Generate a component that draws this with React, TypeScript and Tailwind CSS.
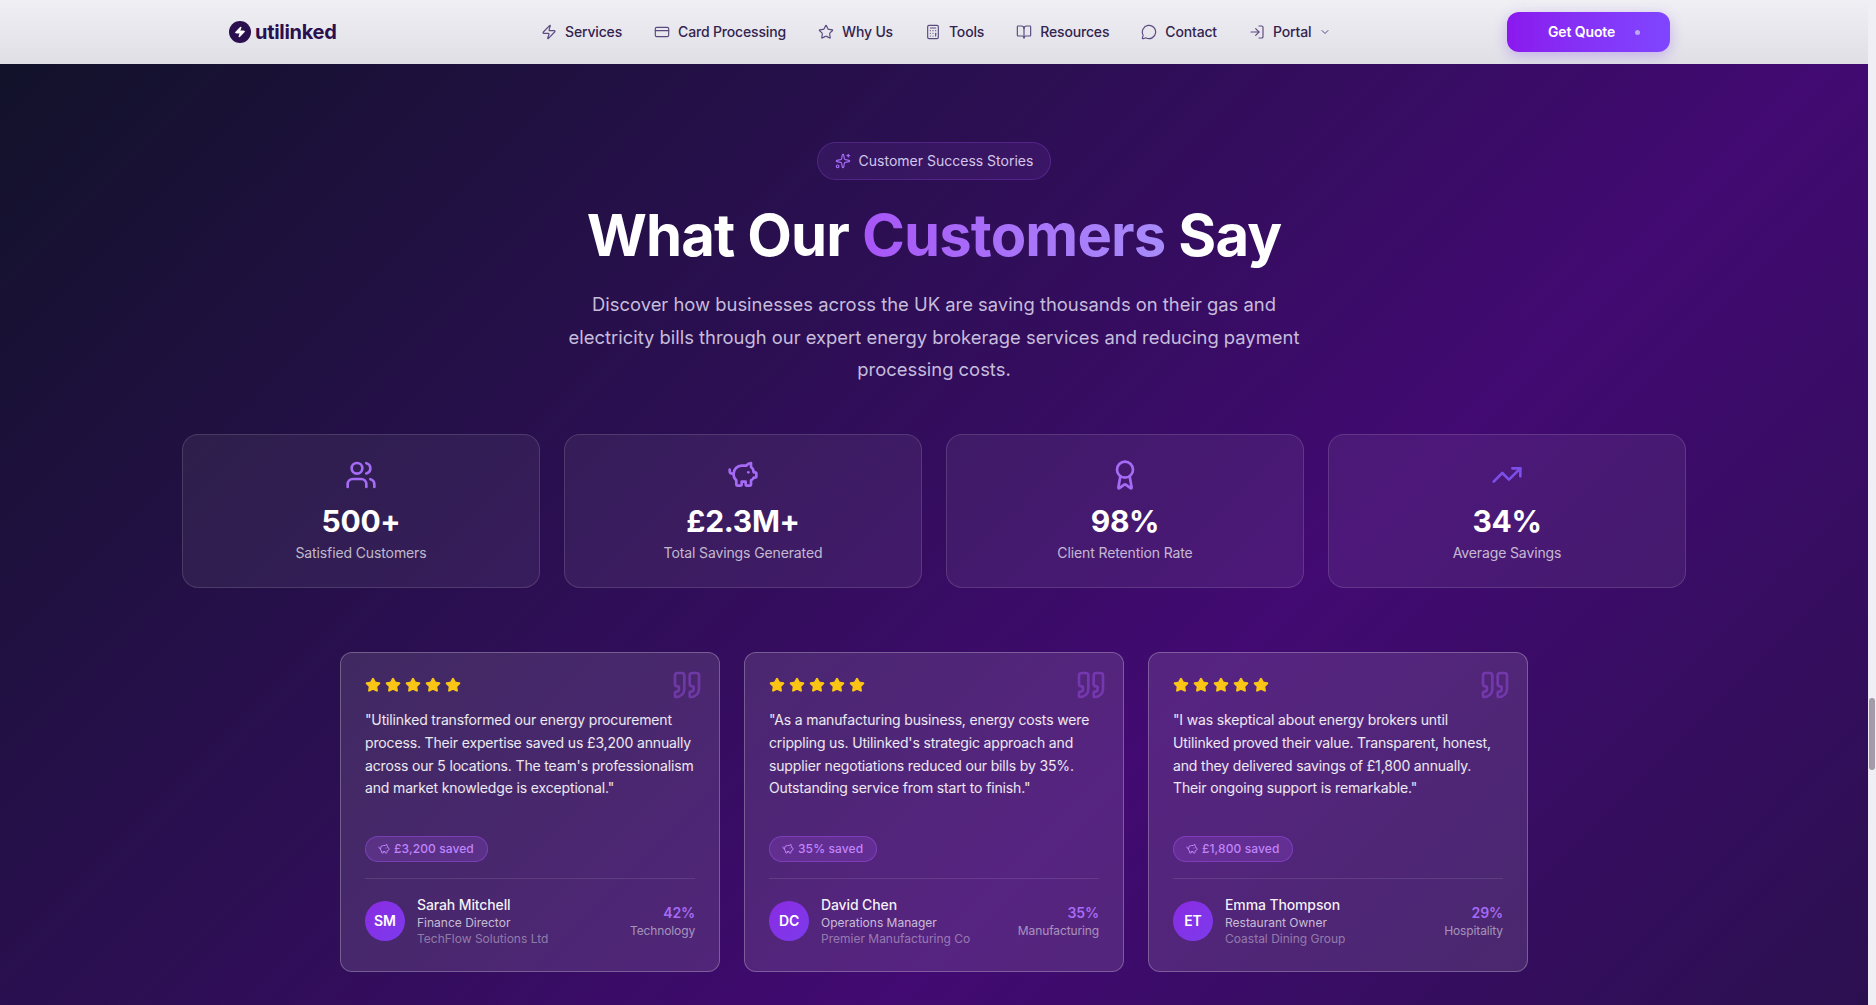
import React from "react";
import {
  Award,
  BookOpen,
  Calculator,
  ChevronDown,
  CreditCard,
  LogIn,
  MessageCircle,
  PiggyBank,
  Quote,
  Sparkles,
  Star,
  TrendingUp,
  Users,
  Zap,
} from "lucide-react";

const navItems = [
  { label: "Services", icon: Zap },
  { label: "Card Processing", icon: CreditCard },
  { label: "Why Us", icon: Star },
  { label: "Tools", icon: Calculator },
  { label: "Resources", icon: BookOpen },
  { label: "Contact", icon: MessageCircle },
  { label: "Portal", icon: LogIn },
];

const stats = [
  { value: "500+", label: "Satisfied Customers", icon: Users, color: "text-[#a56bf5]" },
  { value: "£2.3M+", label: "Total Savings Generated", icon: PiggyBank, color: "text-[#a56bf5]" },
  { value: "98%", label: "Client Retention Rate", icon: Award, color: "text-[#a56bf5]" },
  { value: "34%", label: "Average Savings", icon: TrendingUp, color: "text-[#7c4fe8]" },
];

const testimonials = [
  {
    quote:
      "\"Utilinked transformed our energy procurement process. Their expertise saved us £3,200 annually across our 5 locations. The team's professionalism and market knowledge is exceptional.\"",
    saved: "£3,200 saved",
    initials: "SM",
    name: "Sarah Mitchell",
    role: "Finance Director",
    company: "TechFlow Solutions Ltd",
    percent: "42%",
    sector: "Technology",
  },
  {
    quote:
      "\"As a manufacturing business, energy costs were crippling us. Utilinked's strategic approach and supplier negotiations reduced our bills by 35%. Outstanding service from start to finish.\"",
    saved: "35% saved",
    initials: "DC",
    name: "David Chen",
    role: "Operations Manager",
    company: "Premier Manufacturing Co",
    percent: "35%",
    sector: "Manufacturing",
  },
  {
    quote:
      "\"I was skeptical about energy brokers until Utilinked proved their value. Transparent, honest, and they delivered savings of £1,800 annually. Their ongoing support is remarkable.\"",
    saved: "£1,800 saved",
    initials: "ET",
    name: "Emma Thompson",
    role: "Restaurant Owner",
    company: "Coastal Dining Group",
    percent: "29%",
    sector: "Hospitality",
  },
];

function Navbar() {
  return (
    <nav className="h-16 shrink-0 flex items-center bg-gradient-to-b from-[#f0eff4] to-[#e0dfe6] pl-[229px]">
      <div className="flex items-center gap-1 w-[312px]">
        <span className="w-[22px] h-[22px] rounded-full bg-[#2a0f4f] flex items-center justify-center">
          <Zap className="w-3 h-3.5 text-white fill-white" />
        </span>
        <span className="text-xl font-bold text-[#2a1050] tracking-[-0.015em]">utilinked</span>
      </div>
      <div className="flex items-center gap-8 w-[966px] tracking-[-0.16px]">
        {navItems.map((item) => (
          <a key={item.label} className="flex items-center gap-2 text-sm font-medium text-[#33234f]">
            <item.icon className="w-4 h-4 text-[#5b4a80]" strokeWidth={1.75} />
            {item.label}
            {item.label === "Portal" && <ChevronDown className="w-3 h-3 text-[#5b4a80]" />}
          </a>
        ))}
      </div>
      <button className="w-[163px] h-10 rounded-xl flex items-center pl-[41px] gap-5 bg-gradient-to-r from-[#8a18ee] to-[#7f45ff] text-sm font-semibold text-white shadow-[0_4px_14px_rgba(124,58,237,0.3)]">
        Get Quote
        <span className="w-[5px] h-[5px] rounded-full bg-[#bda8f2]" />
      </button>
    </nav>
  );
}

function StatCard({ stat }: { stat: (typeof stats)[number] }) {
  return (
    <div className="h-[154px] rounded-2xl border border-white/[0.13] bg-white/[0.06] p-6 flex flex-col items-center">
      <stat.icon className={`w-8 h-8 ${stat.color}`} strokeWidth={2} />
      <div className="mt-3 text-3xl leading-9 font-bold text-white tracking-[-0.3px]">{stat.value}</div>
      <div className="mt-1 text-sm text-white/70">{stat.label}</div>
    </div>
  );
}

function TestimonialCard({ item }: { item: (typeof testimonials)[number] }) {
  return (
    <div className="relative h-[320px] rounded-xl border border-white/25 bg-white/[0.11] p-6 flex flex-col">
      <Quote className="absolute top-4 right-4 w-8 h-8 text-[#a855f7]/40" />
      <div className="flex gap-1">
        {[0, 1, 2, 3, 4].map((i) => (
          <Star key={i} className="w-4 h-4 text-[#fac515] fill-[#fac515]" />
        ))}
      </div>
      <p className="mt-4 h-[91px] text-sm leading-[22.75px] tracking-[-0.15px] text-white/90">{item.quote}</p>
      <div className="mt-9 self-start h-[26px] rounded-full border border-[#a855f7]/40 bg-[#a855f7]/20 pl-3 pr-[13px] flex items-center gap-1 text-xs font-medium tracking-[0.1px] text-[#c084fc]">
        <PiggyBank className="w-3 h-3" />
        {item.saved}
      </div>
      <div className="mt-4 border-t border-white/10 pt-4 flex items-center gap-3">
        <div className="w-10 h-10 rounded-full bg-gradient-to-br from-[#8a2be2] to-[#7c3aed] flex items-center justify-center text-sm font-semibold text-white">
          {item.initials}
        </div>
        <div className="flex-1">
          <div className="text-sm leading-5 font-medium text-white/95">{item.name}</div>
          <div className="text-xs leading-4 tracking-normal text-white/70">{item.role}</div>
          <div className="text-xs leading-4 tracking-normal text-white/40">{item.company}</div>
        </div>
        <div className="text-right">
          <div className="text-sm leading-5 font-semibold text-[#a56bf5]">{item.percent}</div>
          <div className="text-xs leading-4 text-white/50">{item.sector}</div>
        </div>
      </div>
    </div>
  );
}

export default function App() {
  return (
    <div className="h-screen overflow-hidden flex font-['Inter',sans-serif] tracking-[-0.12px] bg-[#f0eff5]">
      <div className="w-[1868px] flex flex-col">
        <Navbar />
        <main className="flex-1 bg-[linear-gradient(135deg,#12122a_0%,#2a0f50_35%,#420a72_65%,#2b1050_100%)] flex flex-col items-center pt-[78px]">
          <div className="h-[38px] rounded-full border border-[#a855f7]/25 bg-[#a855f7]/10 px-[17px] flex items-center gap-2 text-sm tracking-normal text-[#d3c6ea]">
            <Sparkles className="w-4 h-4 text-[#a56bf5]" strokeWidth={1.75} />
            Customer Success Stories
          </div>
          <h1 className="mt-[20px] text-[58px] leading-[70px] font-bold text-white tracking-[-0.015em]">
            What Our{" "}
            <span className="bg-gradient-to-r from-[#a855f7] to-[#a78bfa] bg-clip-text text-transparent">Customers</span>{" "}
            Say
          </h1>
          <p className="mt-[18px] w-[760px] text-center text-[18.4px] leading-[32.7px] font-normal tracking-normal text-[#c6bcdc]">
            Discover how businesses across the UK are saving thousands on their gas and electricity bills through our
            expert energy brokerage services and reducing payment processing costs.
          </p>
          <div className="mt-[48px] w-[1504px] grid grid-cols-4 gap-6">
            {stats.map((stat) => (
              <StatCard key={stat.label} stat={stat} />
            ))}
          </div>
          <div className="mt-[64px] w-[1188px] grid grid-cols-3 gap-6">
            {testimonials.map((item) => (
              <TestimonialCard key={item.name} item={item} />
            ))}
          </div>
        </main>
      </div>
      <div className="w-2 pt-[698px] flex justify-center">
        <div className="w-1.5 h-[72px] rounded-full bg-[#a39ba8]" />
      </div>
    </div>
  );
}
